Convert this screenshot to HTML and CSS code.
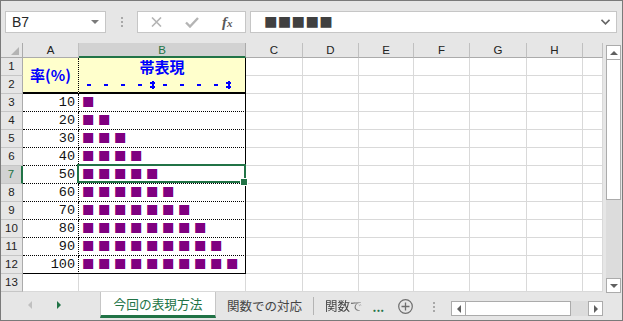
FILE: index.html
```html
<!DOCTYPE html>
<html lang="ja">
<head>
<meta charset="utf-8">
<title>帯表現</title>
<link rel="stylesheet" href="styles.css">
</head>
<body>
<div class="app">
  <div class="fbar">
    <div class="namebox"><span class="nb-text">B7</span><span class="nb-arrow"></span></div>
    <div class="fsep"><i></i><i></i><i></i></div>
    <div class="fbtns">
      <svg class="ico-x" width="11" height="10" viewBox="0 0 11 10"><path d="M1 0.5 L10 9.5 M10 0.5 L1 9.5" stroke="#b4b4b4" stroke-width="1.6" fill="none"/></svg>
      <svg class="ico-ok" width="14" height="11" viewBox="0 0 14 11"><path d="M1 5.5 L5 9.5 L13 1" stroke="#b4b4b4" stroke-width="2.4" fill="none"/></svg>
      <span class="fx"><i>f</i><b>x</b></span>
    </div>
    <div class="finput">
      <span class="fval">■■■■■</span>
      <svg class="chev" width="9" height="6" viewBox="0 0 9 6"><path d="M0.5 0.8 L4.5 4.8 L8.5 0.8" stroke="#666" stroke-width="1.6" fill="none"/></svg>
    </div>
  </div>

  <div class="main">
    <div class="sheet">
      <div class="corner"><span class="tri"></span></div>
      <div class="ch">A</div><div class="ch sel">B</div><div class="ch">C</div><div class="ch">D</div><div class="ch">E</div><div class="ch">F</div><div class="ch">G</div><div class="ch">H</div><div class="ch"></div>

      <div class="rh">1</div><div class="a1">率(%)</div><div class="b1">帯表現</div><div class="c"></div><div class="c"></div><div class="c"></div><div class="c"></div><div class="c"></div><div class="c"></div><div class="c"></div>
      <div class="rh">2</div><div class="b2"><span class="t"></span><span class="t"></span><span class="t"></span><span class="t pre"></span><span class="m"></span><span class="t"></span><span class="t"></span><span class="t"></span><span class="t pre"></span><span class="m"></span></div><div class="c"></div><div class="c"></div><div class="c"></div><div class="c"></div><div class="c"></div><div class="c"></div><div class="c"></div>

      <div class="rh">3</div><div class="av">10</div><div class="bv">■</div><div class="c"></div><div class="c"></div><div class="c"></div><div class="c"></div><div class="c"></div><div class="c"></div><div class="c"></div>
      <div class="rh">4</div><div class="av">20</div><div class="bv">■■</div><div class="c"></div><div class="c"></div><div class="c"></div><div class="c"></div><div class="c"></div><div class="c"></div><div class="c"></div>
      <div class="rh">5</div><div class="av">30</div><div class="bv">■■■</div><div class="c"></div><div class="c"></div><div class="c"></div><div class="c"></div><div class="c"></div><div class="c"></div><div class="c"></div>
      <div class="rh">6</div><div class="av">40</div><div class="bv">■■■■</div><div class="c"></div><div class="c"></div><div class="c"></div><div class="c"></div><div class="c"></div><div class="c"></div><div class="c"></div>
      <div class="rh sel">7</div><div class="av">50</div><div class="bv active">■■■■■</div><div class="c"></div><div class="c"></div><div class="c"></div><div class="c"></div><div class="c"></div><div class="c"></div><div class="c"></div>
      <div class="rh">8</div><div class="av">60</div><div class="bv">■■■■■■</div><div class="c"></div><div class="c"></div><div class="c"></div><div class="c"></div><div class="c"></div><div class="c"></div><div class="c"></div>
      <div class="rh">9</div><div class="av">70</div><div class="bv">■■■■■■■</div><div class="c"></div><div class="c"></div><div class="c"></div><div class="c"></div><div class="c"></div><div class="c"></div><div class="c"></div>
      <div class="rh">10</div><div class="av">80</div><div class="bv">■■■■■■■■</div><div class="c"></div><div class="c"></div><div class="c"></div><div class="c"></div><div class="c"></div><div class="c"></div><div class="c"></div>
      <div class="rh">11</div><div class="av">90</div><div class="bv">■■■■■■■■■</div><div class="c"></div><div class="c"></div><div class="c"></div><div class="c"></div><div class="c"></div><div class="c"></div><div class="c"></div>
      <div class="rh">12</div><div class="av last">100</div><div class="bv last">■■■■■■■■■■</div><div class="c"></div><div class="c"></div><div class="c"></div><div class="c"></div><div class="c"></div><div class="c"></div><div class="c"></div>
      <div class="rh">13</div><div class="c"></div><div class="c"></div><div class="c"></div><div class="c"></div><div class="c"></div><div class="c"></div><div class="c"></div><div class="c"></div><div class="c"></div>
    </div>
    <div class="vscroll">
      <div class="sbtn"><span class="up"></span></div>
      <div class="vthumb"></div>
      <div class="vtrack"></div>
      <div class="sbtn"><span class="down"></span></div>
    </div>
  </div>

  <div class="tabbar">
    <div class="tabnav"><span class="nav-l"></span><span class="nav-r"></span></div>
    <div class="tab active">今回の表現方法</div>
    <div class="tab">関数での対応</div>
    <div class="tsep"></div>
    <div class="tab cut">関数で</div>
    <div class="more">...</div>
    <svg class="add" width="15" height="15" viewBox="0 0 15 15"><circle cx="7.5" cy="7.5" r="6.8" stroke="#6e6e6e" stroke-width="1.2" fill="none"/><path d="M7.5 3.5 V11.5 M3.5 7.5 H11.5" stroke="#6e6e6e" stroke-width="1.3"/></svg>
    <div class="tdots"><i></i><i></i><i></i></div>
    <div class="hscroll">
      <div class="sbtn"><span class="left"></span></div>
      <div class="hthumb"></div>
      <div class="htrack"></div>
      <div class="sbtn"><span class="right"></span></div>
    </div>
  </div>
</div>
</body>
</html>
```
FILE: styles.css
```css
* { box-sizing: border-box; margin: 0; padding: 0; }
html, body { width: 623px; height: 321px; overflow: hidden; }
body { background: #e6e6e6; font-family: "Liberation Sans", "Noto Sans CJK JP", sans-serif; }

.app {
  width: 623px; height: 321px;
  border: 1px solid #7a7a7a;
  background: #e6e6e6;
  display: flex; flex-direction: column;
}

/* formula bar */
.fbar { height: 42px; flex: none; display: flex; align-items: flex-start; padding: 10px 0 0 4px; }
.namebox {
  width: 101px; height: 22px; background: #fff; border: 1px solid #c6c6c6;
  display: flex; align-items: center; justify-content: space-between;
  padding: 0 6px 0 6px; font-size: 14px; color: #262626;
}
.nb-arrow { width: 0; height: 0; border-left: 4px solid transparent; border-right: 4px solid transparent; border-top: 4px solid #7a7a7a; }
.fsep { width: 31px; height: 22px; display: flex; flex-direction: column; align-items: center; justify-content: center; gap: 2px; }
.fsep i, .tdots i { display: block; width: 2px; height: 2px; background: #a8a8a8; }
.fbtns {
  width: 109px; height: 22px; background: #fff; border: 1px solid #c6c6c6;
  display: flex; align-items: center; padding-left: 13px;
}
.ico-x { flex: none; }
.ico-ok { flex: none; margin-left: 23px; }
.fx { margin-left: 23px; font-family: "Liberation Serif", serif; color: #595959; font-size: 15px; line-height: 1; }
.fx i { font-style: italic; font-weight: bold; }
.fx b { font-size: 11px; font-style: italic; }
.finput {
  width: 367px; height: 22px; margin-left: 4px; background: #fff; border: 1px solid #c6c6c6;
  display: flex; align-items: center; justify-content: space-between; padding: 0 6px 0 13px;
}
.fval { font-family: "Noto Sans CJK JP", sans-serif; font-size: 13.5px; color: #404040; line-height: 1; letter-spacing: 0.3px; }

/* grid */
.main { height: 249px; flex: none; display: flex; align-items: flex-start; }
.sheet {
  width: 602px; height: 249px; flex: none;
  display: grid;
  grid-template-columns: 22px 56px 167px 57px 56px 55px 56px 57px 56px 20px;
  grid-template-rows: 15px repeat(13, 18px);
  background: #fff;
}
.corner { background: #e6e6e6; border-right: 1px solid #ababab; border-bottom: 1px solid #ababab; position: relative; }
.tri { position: absolute; right: 3px; bottom: 2px; width: 0; height: 0; border-left: 8px solid transparent; border-bottom: 8px solid #b4b4b4; }
.ch {
  background: #e6e6e6; border-right: 1px solid #c0c0c0; border-bottom: 1px solid #ababab;
  font-size: 11.5px; color: #222; text-align: center; line-height: 14px;
}
.ch.sel { background: #d2d2d2; color: #217346; border-bottom: 2px solid #217346; border-right-color: #ababab; }
.rh {
  background: #e6e6e6; border-right: 1px solid #ababab; border-bottom: 1px solid #c6c6c6;
  font-size: 11.5px; color: #222; text-align: center; line-height: 17px;
}
.rh.sel { background: #d2d2d2; color: #217346; border-right: 2px solid #217346; }
.c { border-right: 1px solid #d9d9d9; border-bottom: 1px solid #d9d9d9; }

.a1, .b1 { font-family: "Noto Sans CJK JP", sans-serif; font-weight: bold; color: #0000ff; font-size: 15px; }
.a1 {
  grid-row: span 2; background: #ffffcc;
  border-right: 1px dotted #000; border-bottom: 2px solid #000;
  display: flex; align-items: center; justify-content: center; padding-bottom: 2px;
}
.b1 { background: #ffffcc; border-right: 1px solid #000; text-align: center; line-height: 18px; }
.b2 {
  background: #ffffcc; border-right: 1px solid #000; border-bottom: 2px solid #000;
  display: flex; align-items: flex-start; padding-left: 8px;
}
.t { display: block; width: 4px; height: 2px; margin-top: 8px; margin-right: 13px; background: #0000ff; }
.t.pre { margin-right: 8px; }
.m {
  display: block; width: 5px; height: 8px; margin-top: 5px; margin-right: 8px;
  background:
    linear-gradient(#0000ff, #0000ff) 1.5px 0 / 2px 8px no-repeat,
    linear-gradient(#0000ff, #0000ff) 0 1px / 5px 2px no-repeat,
    linear-gradient(#0000ff, #0000ff) 0 5px / 5px 2px no-repeat;
}
.av {
  border-right: 1px dotted #000; border-bottom: 1px dotted #000;
  font-family: "Liberation Mono", monospace; font-size: 13.5px; color: #111;
  text-align: right; padding-right: 3px; line-height: 18px;
}
.bv {
  border-right: 1px solid #000; border-bottom: 1px dotted #000;
  font-family: "Noto Sans CJK JP", sans-serif; font-size: 12.4px; color: #800080;
  letter-spacing: 3.6px;
  line-height: 17px; padding-left: 3px; white-space: nowrap;
}
.av.last, .bv.last { border-bottom: 1px solid #000; }
.bv.active { position: relative; }
.bv.active::before {
  content: ""; position: absolute; top: -2px; left: -2px; right: -1px; bottom: 0;
  border: 2px solid #217346;
}
.bv.active::after {
  content: ""; position: absolute; right: -3px; bottom: -3px; width: 6px; height: 6px;
  background: #217346; border: 1px solid #fff;
}

/* scrollbars */
.vscroll { width: 15px; height: 248px; margin: 2px 0 0 3px; display: flex; flex-direction: column; }
.sbtn { width: 15px; height: 15px; flex: none; background: #fff; border: 1px solid #ababab; display: flex; align-items: center; justify-content: center; }
.up { width: 0; height: 0; border-left: 4px solid transparent; border-right: 4px solid transparent; border-bottom: 4px solid #606060; }
.down { width: 0; height: 0; border-left: 4px solid transparent; border-right: 4px solid transparent; border-top: 4px solid #606060; }
.left { width: 0; height: 0; border-top: 4px solid transparent; border-bottom: 4px solid transparent; border-right: 4px solid #606060; }
.right { width: 0; height: 0; border-top: 4px solid transparent; border-bottom: 4px solid transparent; border-left: 4px solid #606060; }
.vthumb { height: 140px; flex: none; background: #fff; border: 1px solid #ababab; border-top: none; }
.vtrack { flex: 1; background: #dcdcdc; }

/* tabs */
.tabbar { height: 28px; flex: none; display: flex; align-items: flex-start; font-family: "Noto Sans CJK JP", sans-serif; font-size: 12.5px; }
.tabnav { width: 99px; height: 26px; display: flex; align-items: center; padding-left: 27px; }
.nav-l { width: 0; height: 0; border-top: 4px solid transparent; border-bottom: 4px solid transparent; border-right: 4px solid #c0c0c0; }
.nav-r { margin-left: 25px; width: 0; height: 0; border-top: 4px solid transparent; border-bottom: 4px solid transparent; border-left: 4px solid #217346; }
.tab { height: 26px; display: flex; align-items: center; padding: 0 11px; color: #444; white-space: nowrap; line-height: 1; padding-top: 2px; }
.tab.active {
  width: 116px; justify-content: center; background: #fff; color: #217346; font-size: 12.7px;
  border-left: 1px solid #c6c6c6; border-right: 1px solid #c6c6c6; border-bottom: 3px solid #217346;
  padding: 2px 0 0 0;
}
.tsep { width: 1px; height: 18px; margin-top: 5px; background: #b4b4b4; }
.tab.cut { padding-right: 0; -webkit-mask-image: linear-gradient(to right, #000 75%, rgba(0,0,0,0.15) 100%); mask-image: linear-gradient(to right, #000 75%, rgba(0,0,0,0.15) 100%); }
.more { height: 26px; display: flex; align-items: center; color: #217346; font-weight: bold; font-size: 12px; margin-left: 10px; padding-top: 3px; letter-spacing: 0; }
.add { margin: 7px 0 0 14px; flex: none; }
.tdots { width: 38px; height: 26px; padding-left: 4px; display: flex; flex-direction: column; align-items: center; justify-content: center; gap: 2px; padding-top: 4px; }
.hscroll { width: 152px; height: 15px; margin-top: 9px; display: flex; }
.hthumb { width: 105px; background: #fff; border: 1px solid #ababab; border-left: none; }
.htrack { flex: 1; background: #dcdcdc; }
```
